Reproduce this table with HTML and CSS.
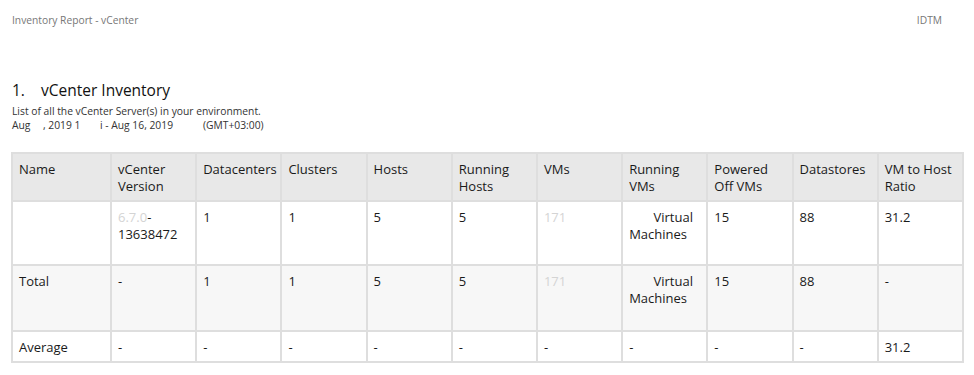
FILE: index.html
```html
<!DOCTYPE html>
<html>
<head>
<meta charset="utf-8">
<link rel="stylesheet" href="styles.css">
</head>
<body>
<div class="page">
  <div class="topbar">
    <span class="doc-title">Inventory Report - vCenter</span>
    <span class="doc-org">IDTM</span>
  </div>
  <h1 class="section-title"><span class="num">1.</span>vCenter Inventory</h1>
  <p class="desc">List of all the vCenter Server(s) in your environment.</p>
  <p class="desc"><span class="seg s1">Aug</span><span class="seg s2">, 2019 1</span><span class="seg s3">i - Aug 16, 2019</span><span class="seg">(GMT+03:00)</span></p>
  <table class="inv">
    <colgroup>
      <col class="col-name">
      <col><col><col><col><col><col><col><col><col><col>
    </colgroup>
    <thead>
      <tr>
        <th>Name</th>
        <th>vCenter Version</th>
        <th>Datacenters</th>
        <th>Clusters</th>
        <th>Hosts</th>
        <th>Running Hosts</th>
        <th>VMs</th>
        <th>Running VMs</th>
        <th>Powered Off VMs</th>
        <th>Datastores</th>
        <th>VM to Host Ratio</th>
      </tr>
    </thead>
    <tbody>
      <tr class="r-data">
        <td></td>
        <td><span class="faint">6.7.0</span>-<br>13638472</td>
        <td>1</td>
        <td>1</td>
        <td>5</td>
        <td>5</td>
        <td><span class="faint">171</span></td>
        <td><span class="spacer"></span> Virtual Machines</td>
        <td>15</td>
        <td>88</td>
        <td>31.2</td>
      </tr>
      <tr class="r-total">
        <td>Total</td>
        <td>-</td>
        <td>1</td>
        <td>1</td>
        <td>5</td>
        <td>5</td>
        <td><span class="faint">171</span></td>
        <td><span class="spacer"></span> Virtual Machines</td>
        <td>15</td>
        <td>88</td>
        <td>-</td>
      </tr>
      <tr class="r-avg">
        <td>Average</td>
        <td>-</td>
        <td>-</td>
        <td>-</td>
        <td>-</td>
        <td>-</td>
        <td>-</td>
        <td>-</td>
        <td>-</td>
        <td>-</td>
        <td>31.2</td>
      </tr>
    </tbody>
  </table>
</div>
</body>
</html>
```
FILE: styles.css
```css
html, body {
  margin: 0;
  padding: 0;
  background: #ffffff;
}
body {
  font-family: "Open Sans", "Liberation Sans", sans-serif;
  color: #1a1a1a;
}
.page {
  padding: 13px 10px 0 11px;
}
.topbar {
  display: flex;
  justify-content: space-between;
  font-size: 10.25px;
  color: #777777;
  line-height: 14px;
  padding: 0 22px 0 1px;
}
.section-title {
  margin: 53px 0 4px 1px;
  font-size: 15.5px;
  font-weight: 400;
  line-height: 20px;
  color: #111111;
}
.section-title .num {
  display: inline-block;
  width: 29px;
}
.desc {
  margin: 0 0 0 1px;
  font-size: 10.3px;
  line-height: 14px;
  color: #333333;
  white-space: nowrap;
}
.seg {
  display: inline-block;
}
.s1 { width: 31px; }
.s2 { width: 57px; }
.s3 { width: 103px; }
.inv {
  margin-top: 20px;
  border-collapse: collapse;
  table-layout: fixed;
  width: 953px;
  font-size: 13px;
  line-height: 17px;
}
.col-name {
  width: 99px;
}
.inv th, .inv td {
  border: 2px solid #dedede;
  padding: 7px 6px 5px;
  text-align: left;
  vertical-align: top;
  font-weight: 400;
  color: #1a1a1a;
}
.inv thead th {
  background: #e8e8e8;
  height: 34px;
}
.r-data td { height: 50px; background: #ffffff; }
.r-total td { height: 52px; background: #f7f7f7; }
.r-avg td { height: 17px; background: #ffffff; }
.faint {
  color: #d4d4d4;
}
.spacer {
  display: inline-block;
  width: 21px;
}
```
